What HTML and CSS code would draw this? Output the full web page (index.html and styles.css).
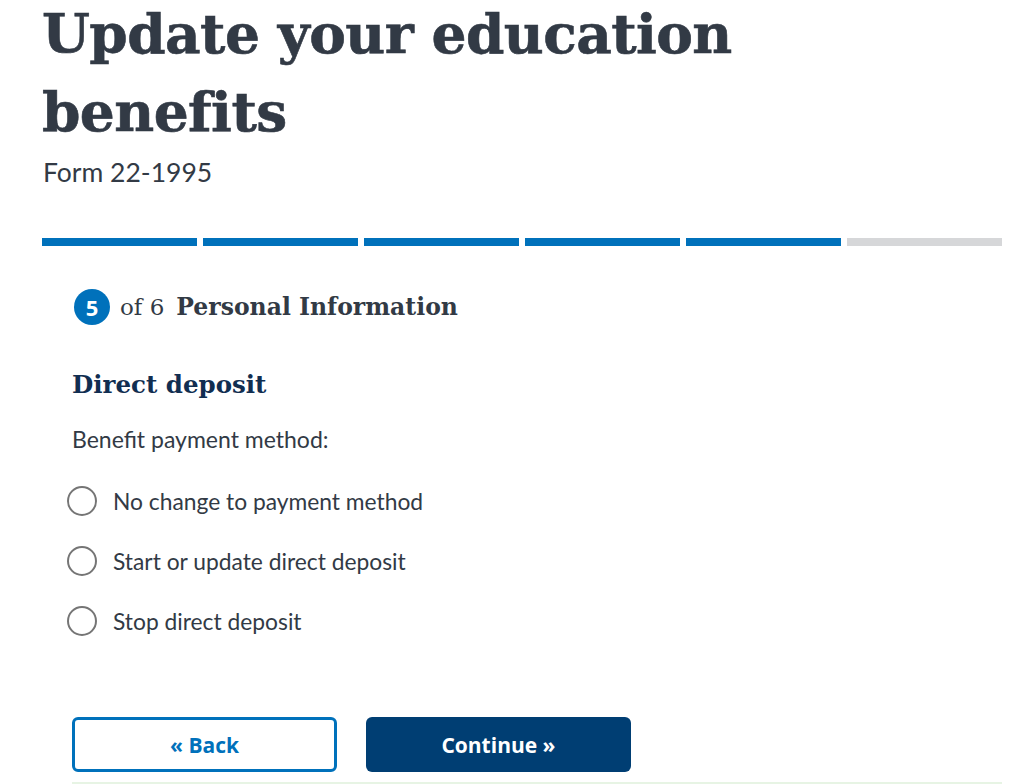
FILE: index.html
```html
<!DOCTYPE html>
<html lang="en">
<head>
<meta charset="utf-8">
<title>Update your education benefits</title>
<link rel="stylesheet" href="styles.css">
</head>
<body>
<main class="page">
  <header class="intro">
    <h1 class="title">Update your education benefits</h1>
    <p class="subtitle">Form 22-1995</p>
  </header>
  <div class="progress">
    <span class="seg done"></span>
    <span class="seg done"></span>
    <span class="seg done"></span>
    <span class="seg done"></span>
    <span class="seg done"></span>
    <span class="seg"></span>
  </div>
  <section class="form">
    <h2 class="step"><span class="step-num">5</span><span class="step-of">of 6</span><span class="step-name">Personal Information</span></h2>
    <h3 class="section-title">Direct deposit</h3>
    <fieldset class="radios">
      <legend class="legend">Benefit payment method:</legend>
      <label class="radio"><span class="dot"></span>No change to payment method</label>
      <label class="radio"><span class="dot"></span>Start or update direct deposit</label>
      <label class="radio"><span class="dot"></span>Stop direct deposit</label>
    </fieldset>
    <div class="actions">
      <button class="btn btn-back">« Back</button>
      <button class="btn btn-continue">Continue »</button>
    </div>
    <div class="rule"></div>
  </section>
</main>
</body>
</html>
```
FILE: styles.css
```css
* { box-sizing: border-box; }
html, body { margin: 0; padding: 0; background: #fff; }
body { font-family: "Lato", "Open Sans", sans-serif; color: #323a45; overflow: hidden; }
.page { padding: 0 24px 0 42px; }
.title {
  font-family: "DejaVu Serif", serif;
  font-weight: 900;
  font-size: 55px;
  line-height: 78px;
  letter-spacing: -0.6px;
  color: #323a45;
  margin: -5px 0 0 0;
  width: 780px;
  -webkit-text-stroke: 0.6px #323a45;
}
.subtitle { margin: 4px 0 0 1px; font-size: 26.5px; line-height: 34px; color: #323a45; }
.progress { display: flex; gap: 6px; margin-top: 49px; width: 960px; }
.seg { flex: 1; height: 8px; background: #d6d7d9; }
.seg.done { background: #0071bb; }
.form { padding-left: 30px; }
.step { display: flex; align-items: center; margin: 43px 0 0 0; font-weight: normal; }
.step-num {
  width: 36px; height: 36px; border-radius: 50%; background: #0071bb; color: #fff;
  font-family: "Open Sans", sans-serif; font-weight: bold; font-size: 22px;
  display: flex; align-items: center; justify-content: center; margin: 0 10px 0 2px;
}
.step-of { font-family: "DejaVu Serif", serif; font-size: 23px; color: #323a45; margin-right: 12px; }
.step-name { font-family: "DejaVu Serif", serif; font-weight: bold; font-size: 23.5px; color: #323a45; }
.section-title { font-family: "DejaVu Serif", serif; font-weight: bold; font-size: 24.5px; color: #112e51; margin: 44px 0 0 0; line-height: 32px; }
.radios { border: 0; padding: 0; margin: 24px 0 0 0; }
.legend { font-size: 23px; line-height: 28px; padding: 0; margin-bottom: 18px; }
.radio { display: flex; align-items: center; font-size: 22.8px; height: 60px; margin-left: -5px; }
.dot { width: 30px; height: 30px; border-radius: 50%; border: 2px solid #757575; margin-right: 16px; }
.actions { display: flex; gap: 29px; margin-top: 66px; }
.btn { width: 265px; height: 55px; border-radius: 6px; font-family: "Open Sans", sans-serif; font-weight: bold; font-size: 21px; }
.btn-back { background: #fff; border: 3px solid #0071bb; color: #0071bb; }
.btn-continue { background: #003e73; border: 0; color: #fff; }
.rule { height: 2px; background: #e7f4e4; margin-top: 10px; width: 930px; }
```
